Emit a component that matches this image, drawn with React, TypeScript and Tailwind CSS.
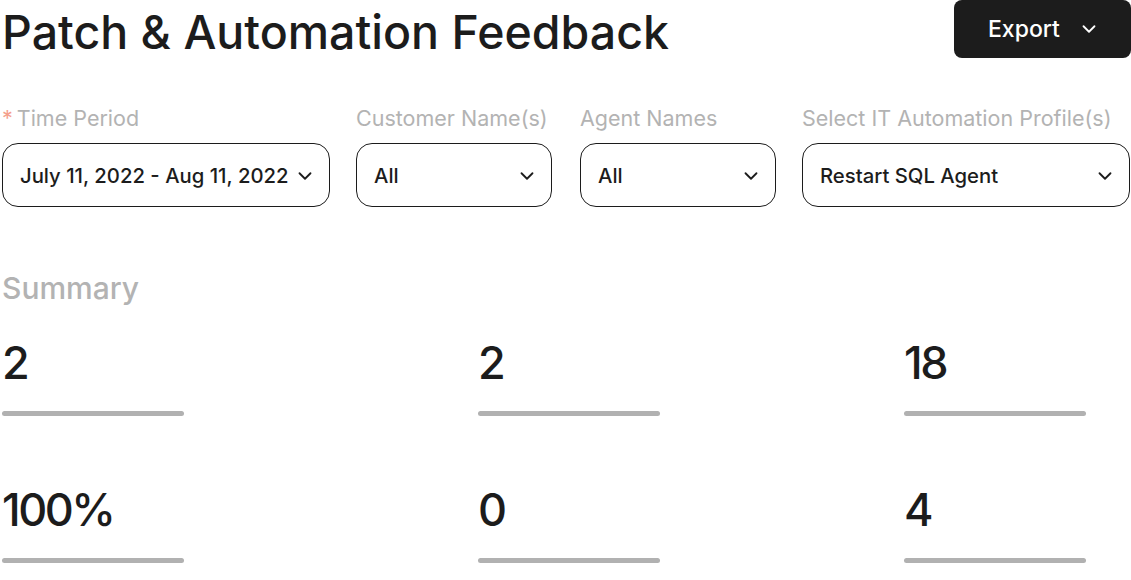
import { ChevronDown } from "lucide-react";

const font = { fontFamily: "Inter, 'Liberation Sans', sans-serif" };

interface FilterProps {
  label: string;
  value: string;
  width: string;
  required?: boolean;
}

function Filter({ label, value, width, required }: FilterProps) {
  return (
    <div className={`flex flex-col ${width}`}>
      <div className="text-[21.5px] leading-[24px] text-[#b3b3b3] whitespace-nowrap">
        {required && <span className="text-[#f4a08c] mr-[4px]">*</span>}
        {label}
      </div>
      <button
        type="button"
        className="mt-[13px] flex h-[64px] w-full items-center justify-between rounded-[16px] border-[1.5px] border-[#1c1c1c] bg-white pl-[17px] pr-[13px] pt-[2px] text-left"
      >
        <span className="text-[20.3px] font-medium text-[#1c1c1c] whitespace-nowrap">{value}</span>
        <ChevronDown className="h-[22px] w-[22px] text-[#1c1c1c]" strokeWidth={2} />
      </button>
    </div>
  );
}

function Stat({ value }: { value: string }) {
  return (
    <div className="flex flex-col">
      <div className="text-[45px] font-medium leading-[52px] tracking-[-2.5px] text-[#1c1c1c]">{value}</div>
      <div className="mt-[22px] h-[5px] w-[182px] rounded-full bg-[#b1b1b1]" />
    </div>
  );
}

export default function App() {
  return (
    <div className="min-h-screen w-full bg-white pl-[2px]" style={font}>
      <div className="flex items-start justify-between">
        <h1 className="mt-[7px] text-[46.5px] font-medium leading-[50px] text-[#1c1c1c]">
          Patch &amp; Automation Feedback
        </h1>
        <button
          type="button"
          className="flex h-[58px] w-[177px] items-center gap-[18px] rounded-[8px] bg-[#1c1c1c] pl-[34px] text-[23px] font-medium text-white"
        >
          Export
          <ChevronDown className="h-[22px] w-[22px]" strokeWidth={2} />
        </button>
      </div>

      <div className="mt-[48px] flex">
        <Filter label="Time Period" value="July 11, 2022 - Aug 11, 2022" width="w-[328px]" required />
        <div className="ml-[26px]">
          <Filter label="Customer Name(s)" value="All" width="w-[196px]" />
        </div>
        <div className="ml-[28px]">
          <Filter label="Agent Names" value="All" width="w-[196px]" />
        </div>
        <div className="ml-[26px]">
          <Filter label="Select IT Automation Profile(s)" value="Restart SQL Agent" width="w-[328px]" />
        </div>
      </div>

      <h2 className="mt-[64px] text-[30px] font-medium leading-[34px] text-[#b3b3b3]">Summary</h2>

      <div className="mt-[32px] grid grid-cols-[476px_426px_1fr] gap-y-[68px]">
        <Stat value="2" />
        <Stat value="2" />
        <Stat value="18" />
        <Stat value="100%" />
        <Stat value="0" />
        <Stat value="4" />
      </div>
    </div>
  );
}
